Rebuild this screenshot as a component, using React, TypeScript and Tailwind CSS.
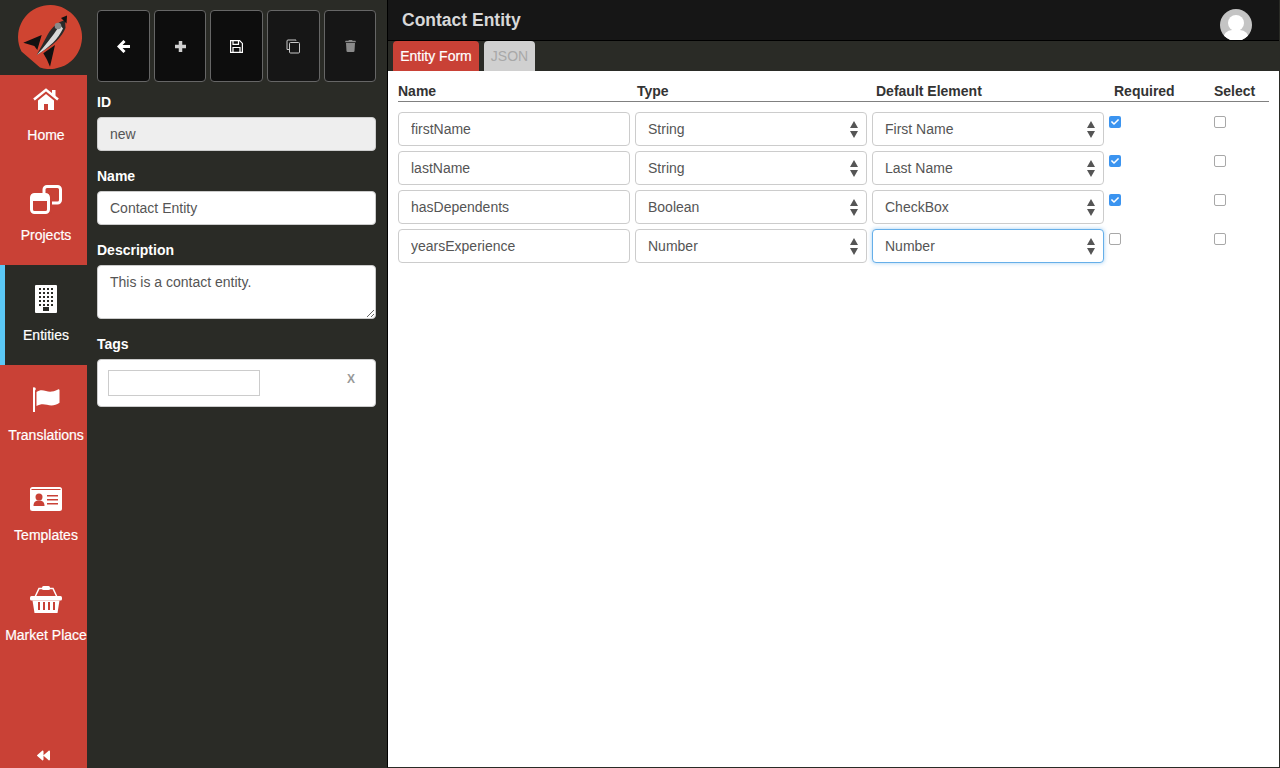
import React from 'react';
import { FaTrash, FaBackward, FaCheck } from 'react-icons/fa';

const navItems = [
  { label: 'Projects', icon: <ProjectsIcon /> },
  { label: 'Entities', icon: <BuildingIcon />, active: true },
  { label: 'Translations', icon: <FlagIcon /> },
  { label: 'Templates', icon: <CardIcon /> },
  { label: 'Market Place', icon: <BasketIcon /> },
];

const rows = [
  { name: 'firstName', type: 'String', element: 'First Name', required: true },
  { name: 'lastName', type: 'String', element: 'Last Name', required: true },
  { name: 'hasDependents', type: 'Boolean', element: 'CheckBox', required: true },
  { name: 'yearsExperience', type: 'Number', element: 'Number', required: false, focused: true },
];

function HomeIcon() {
  return (
    <svg width="26" height="22" viewBox="0 0 26 22" fill="#fff">
      <path d="M5 12.500L13 6l8 6.500V22h-6v-6h-4v6H5z" />
      <path d="M1 11.500L13 1.800l12 9.700" fill="none" stroke="#fff" strokeWidth="2.600" />
      <rect x="19" y="2" width="3.500" height="6" />
    </svg>
  );
}

function ProjectsIcon() {
  return (
    <svg width="32" height="29" viewBox="0 0 32 29" fill="none">
      <rect x="14" y="1.500" width="16.500" height="16.500" rx="3" stroke="#fff" strokeWidth="3" />
      <rect x="0" y="8" width="22" height="21" rx="3" fill="#c94136" />
      <rect x="1.500" y="9.500" width="17" height="18" rx="3" stroke="#fff" strokeWidth="3" />
      <rect x="1.500" y="9.500" width="17" height="6.500" fill="#fff" />
    </svg>
  );
}

function BuildingIcon() {
  const windows = [];
  for (let r = 0; r < 5; r++) {
    for (let c = 0; c < 4; c++) {
      windows.push(<rect key={`${r}-${c}`} x={4 + c * 4} y={3 + r * 4} width="2" height="2" fill="#2a2b26" />);
    }
  }
  return (
    <svg width="22" height="28" viewBox="0 0 22 28">
      <rect x="0" y="0" width="22" height="28" rx="1" fill="#fff" />
      {windows}
      <rect x="8" y="22" width="6" height="4" fill="#2a2b26" />
    </svg>
  );
}

function FlagIcon() {
  return (
    <svg width="27" height="25" viewBox="0 0 27 25" fill="#fff">
      <rect x="0" y="2" width="2" height="23" />
      <circle cx="1" cy="2" r="1.800" />
      <path d="M3.500 5c3-2.200 6-2.200 9.500-1 3.500 1.200 7 1 12-1.500.800-.4 1.500 0 1.500.8v12.500c-4 2.700-8 3.200-12.500 2-3.700-1-7-.8-10.500 1.200z" />
    </svg>
  );
}

function CardIcon() {
  return (
    <svg width="32" height="24" viewBox="0 0 32 24">
      <rect x="0" y="0" width="32" height="24" rx="2.500" fill="#fff" />
      <rect x="1.500" y="2" width="29" height="1" fill="#c94136" />
      <circle cx="9" cy="10" r="3.500" fill="#c94136" />
      <path d="M3.500 19c0-4 2-5.500 5.500-5.500s5.500 1.500 5.500 5.500z" fill="#c94136" />
      <rect x="17" y="8" width="11" height="1.500" fill="#c94136" />
      <rect x="17" y="12" width="11" height="1.500" fill="#c94136" />
      <rect x="17" y="16" width="11" height="1.500" fill="#c94136" />
    </svg>
  );
}

function BasketIcon() {
  return (
    <svg width="32" height="28" viewBox="0 0 32 28" fill="#fff">
      <path d="M5 12L9 3.500h14L27 12" fill="none" stroke="#fff" strokeWidth="1.500" />
      <rect x="12" y="1" width="8" height="4" rx="1.500" />
      <rect x="0" y="11" width="32" height="4.500" rx="1.500" />
      <path d="M2.500 15.500h27L27.500 28h-23z" />
      <rect x="8" y="17" width="2" height="8" fill="#c94136" />
      <rect x="13" y="17" width="2" height="8" fill="#c94136" />
      <rect x="18" y="17" width="2" height="8" fill="#c94136" />
      <rect x="23" y="17" width="2" height="8" fill="#c94136" />
    </svg>
  );
}

function ArrowIcon() {
  return (
    <svg width="13" height="13" viewBox="0 0 13 13" fill="none" stroke="#fff" strokeWidth="3">
      <path d="M13 6.500H3" />
      <path d="M7.500 1L2 6.500 7.500 12" />
    </svg>
  );
}

function PlusIcon() {
  return (
    <svg width="11" height="11" viewBox="0 0 11 11" fill="#d0d0d0">
      <rect x="3.750" y="0" width="3.500" height="11" />
      <rect x="0" y="3.750" width="11" height="3.500" />
    </svg>
  );
}

function SaveIcon() {
  return (
    <svg width="13" height="13" viewBox="0 0 13 13" fill="none" stroke="#fff" strokeWidth="1.200">
      <path d="M.6.600h9l2.800 2.800v9H.6z" />
      <path d="M3 .600v3.800h5.500V.600" />
      <path d="M3 12.400V7.500h7v4.900" />
    </svg>
  );
}

function CopyIcon() {
  return (
    <svg width="15" height="15" viewBox="0 0 15 15" fill="none" stroke="#c8c8c8" strokeWidth="1">
      <path d="M10 1.500V1H2a1 1 0 0 0-1 1v8.500h2" />
      <rect x="3.500" y="3.500" width="10" height="10.500" rx="1" />
    </svg>
  );
}

function Logo() {
  return (
    <svg width="66" height="66" viewBox="0 0 66 66">
      <path d="M22 62.400A32 32 0 1 0 3.500 46.500z" fill="#cf4431" />
      <path d="M18.700 50L30 29C34 22 40 17 47 15l.5 8C44 32 36 40 18.700 50z" fill="#2a2a2a" />
      <path d="M18.700 50C26 42 34 32 42 20l3 3.500C40 34 32 42 18.700 50z" fill="#d8d8d8" />
      <circle cx="40" cy="21" r="3.300" fill="#8a8a8a" />
      <path d="M43 13l6-2.500-.5 8z" fill="#111" />
      <path d="M5.300 37.700L23.700 30l-4.400 15-3-4z" fill="#111" />
      <path d="M25.300 48.300L37 40l-5 21.700-3-7z" fill="#111" />
    </svg>
  );
}

function ToolButton({ children, dim }: { children: React.ReactNode; dim?: boolean }) {
  return (
    <button className={`h-[72px] rounded border border-[#666666] flex items-center justify-center ${dim ? 'bg-[#161616]' : 'bg-[#0d0d0d]'}`}>
      {children}
    </button>
  );
}

function SelectBox({ value, focused }: { value: string; focused?: boolean }) {
  return (
    <div className={`relative h-[34px] w-[232px] rounded bg-white border flex items-center pl-[12px] text-[#555555] ${focused ? 'border-[#66afe9] shadow-[0_0_4px_rgba(102,175,233,0.6)]' : 'border-[#cccccc]'}`}>
      {value}
      <svg className="absolute right-[8px] top-[8px]" width="8" height="17" viewBox="0 0 8 17" fill="#555555">
        <path d="M4 0l4 7H0zM0 10h8l-4 7z" />
      </svg>
    </div>
  );
}

function CheckBox({ checked }: { checked?: boolean }) {
  return (
    <div className={`mt-[4px] w-[12px] h-[12px] rounded-[2px] flex items-center justify-center ${checked ? 'bg-[#3b94f0]' : 'bg-white border border-[#a8a8a8]'}`}>
      {checked && <FaCheck className="w-[8px] h-[8px] text-white" />}
    </div>
  );
}

const labelClass = 'block font-bold text-white leading-5 mb-[5px]';
const inputClass = 'block w-full h-[34px] rounded border border-[#cccccc] px-[12px] text-[#555555] text-sm outline-none';

export default function App() {
  return (
    <div className="flex w-[1280px] h-[768px] overflow-hidden bg-[#2a2b26] text-sm font-['Liberation_Sans',Arial,sans-serif]">
      {/* icon rail */}
      <div className="w-[87px] shrink-0 flex flex-col">
        <div className="h-[75px] shrink-0 pl-[18px] pt-[5px]">
          <Logo />
        </div>
        <div className="flex-1 bg-[#c94136] flex flex-col text-white [-webkit-text-stroke:0.2px_white]">
          <div className="h-[90px] flex flex-col items-center pt-[10px] border-l-[5px] border-transparent">
            <div className="h-[28px] flex items-center"><HomeIcon /></div>
            <span className="mt-[12px] leading-5">Home</span>
          </div>
          {navItems.map((item) => (
            <div
              key={item.label}
              className={`h-[100px] flex flex-col items-center pt-[20px] whitespace-nowrap border-l-[5px] ${item.active ? 'bg-[#2a2b26] border-[#5bc8f5]' : 'border-transparent'}`}
            >
              <div className="h-[28px] flex items-center">{item.icon}</div>
              <span className="mt-[12px] leading-5">{item.label}</span>
            </div>
          ))}
          <div className="mt-auto h-[24px] flex justify-center pt-[5px]">
            <FaBackward className="w-[13px] h-[13px]" />
          </div>
        </div>
      </div>

      {/* entity details */}
      <div className="w-[300px] shrink-0 pl-[10px] pr-[11px] pt-[10px]">
        <div className="grid grid-cols-[53px_52px_53px_53px_52px] gap-[4px] mb-[10px]">
          <ToolButton><ArrowIcon /></ToolButton>
          <ToolButton><PlusIcon /></ToolButton>
          <ToolButton><SaveIcon /></ToolButton>
          <ToolButton dim><CopyIcon /></ToolButton>
          <ToolButton dim><FaTrash className="w-[11px] h-[12px] text-[#8a8a8a]" /></ToolButton>
        </div>
        <label className={labelClass}>ID</label>
        <input className={`${inputClass} bg-[#eeeeee]`} defaultValue="new" readOnly />
        <label className={`${labelClass} mt-[15px]`}>Name</label>
        <input className={`${inputClass} bg-white`} defaultValue="Contact Entity" />
        <label className={`${labelClass} mt-[15px]`}>Description</label>
        <textarea className="block w-full h-[54px] rounded border border-[#cccccc] bg-white px-[12px] py-[6px] leading-5 text-[#555555] text-sm outline-none" defaultValue="This is a contact entity." />
        <label className={`${labelClass} mt-[15px]`}>Tags</label>
        <div className="relative h-[48px] rounded border border-[#cccccc] bg-white pl-[10px] pt-[10px]">
          <input className="block w-[152px] h-[26px] border border-[#cccccc] outline-none" />
          <span className="absolute right-[20px] top-[11px] text-xs font-bold text-[#999999]">X</span>
        </div>
      </div>

      {/* main area */}
      <div className="flex-1 flex flex-col min-w-0 border-l border-black border-r border-r-[#2a2b26] border-b border-b-[#2a2b26]">
        <div className="relative h-[41px] shrink-0 overflow-hidden bg-[#161616] border-b border-black pl-[14px] flex items-center">
          <h1 className="font-bold text-[17.5px] text-[#d8d8d8]">Contact Entity</h1>
          <div className="absolute right-[27px] top-[9px] w-[32px] h-[32px] rounded-full overflow-hidden bg-[#c4c4c4]">
            <div className="mx-auto mt-[6px] w-[16px] h-[16px] rounded-full bg-white" />
            <div className="mx-auto -mt-[1px] w-[26px] h-[18px] rounded-full bg-white" />
          </div>
        </div>
        <div className="h-[30px] shrink-0 flex gap-[5px] pl-[5px] items-end">
          <div className="h-[30px] w-[86px] rounded-t bg-[#c94136] text-white [-webkit-text-stroke:0.2px_white] flex items-center justify-center">Entity Form</div>
          <div className="h-[30px] w-[51px] rounded-t bg-[#d0d0d0] text-[#a8a8a8] flex items-center justify-center">JSON</div>
        </div>
        <div className="flex-1 bg-white pl-[10px] pr-[10px] pt-[10px] text-[#555555]">
          <div className="grid grid-cols-[239px_239px_238px_100px_1fr] font-bold text-[#333333] leading-5 border-b border-[#808080] mb-[10px] h-[21px]">
            <span>Name</span>
            <span>Type</span>
            <span>Default Element</span>
            <span>Required</span>
            <span>Select</span>
          </div>
          <div className="flex flex-col gap-[5px]">
            {rows.map((row) => (
              <div key={row.name} className="flex">
                <input className={`${inputClass} bg-white !w-[232px]`} defaultValue={row.name} />
                <div className="ml-[5px]"><SelectBox value={row.type} /></div>
                <div className="ml-[5px]"><SelectBox value={row.element} focused={row.focused} /></div>
                <div className="ml-[5px] w-[105px]"><CheckBox checked={row.required} /></div>
                <CheckBox />
              </div>
            ))}
          </div>
        </div>
      </div>
    </div>
  );
}
